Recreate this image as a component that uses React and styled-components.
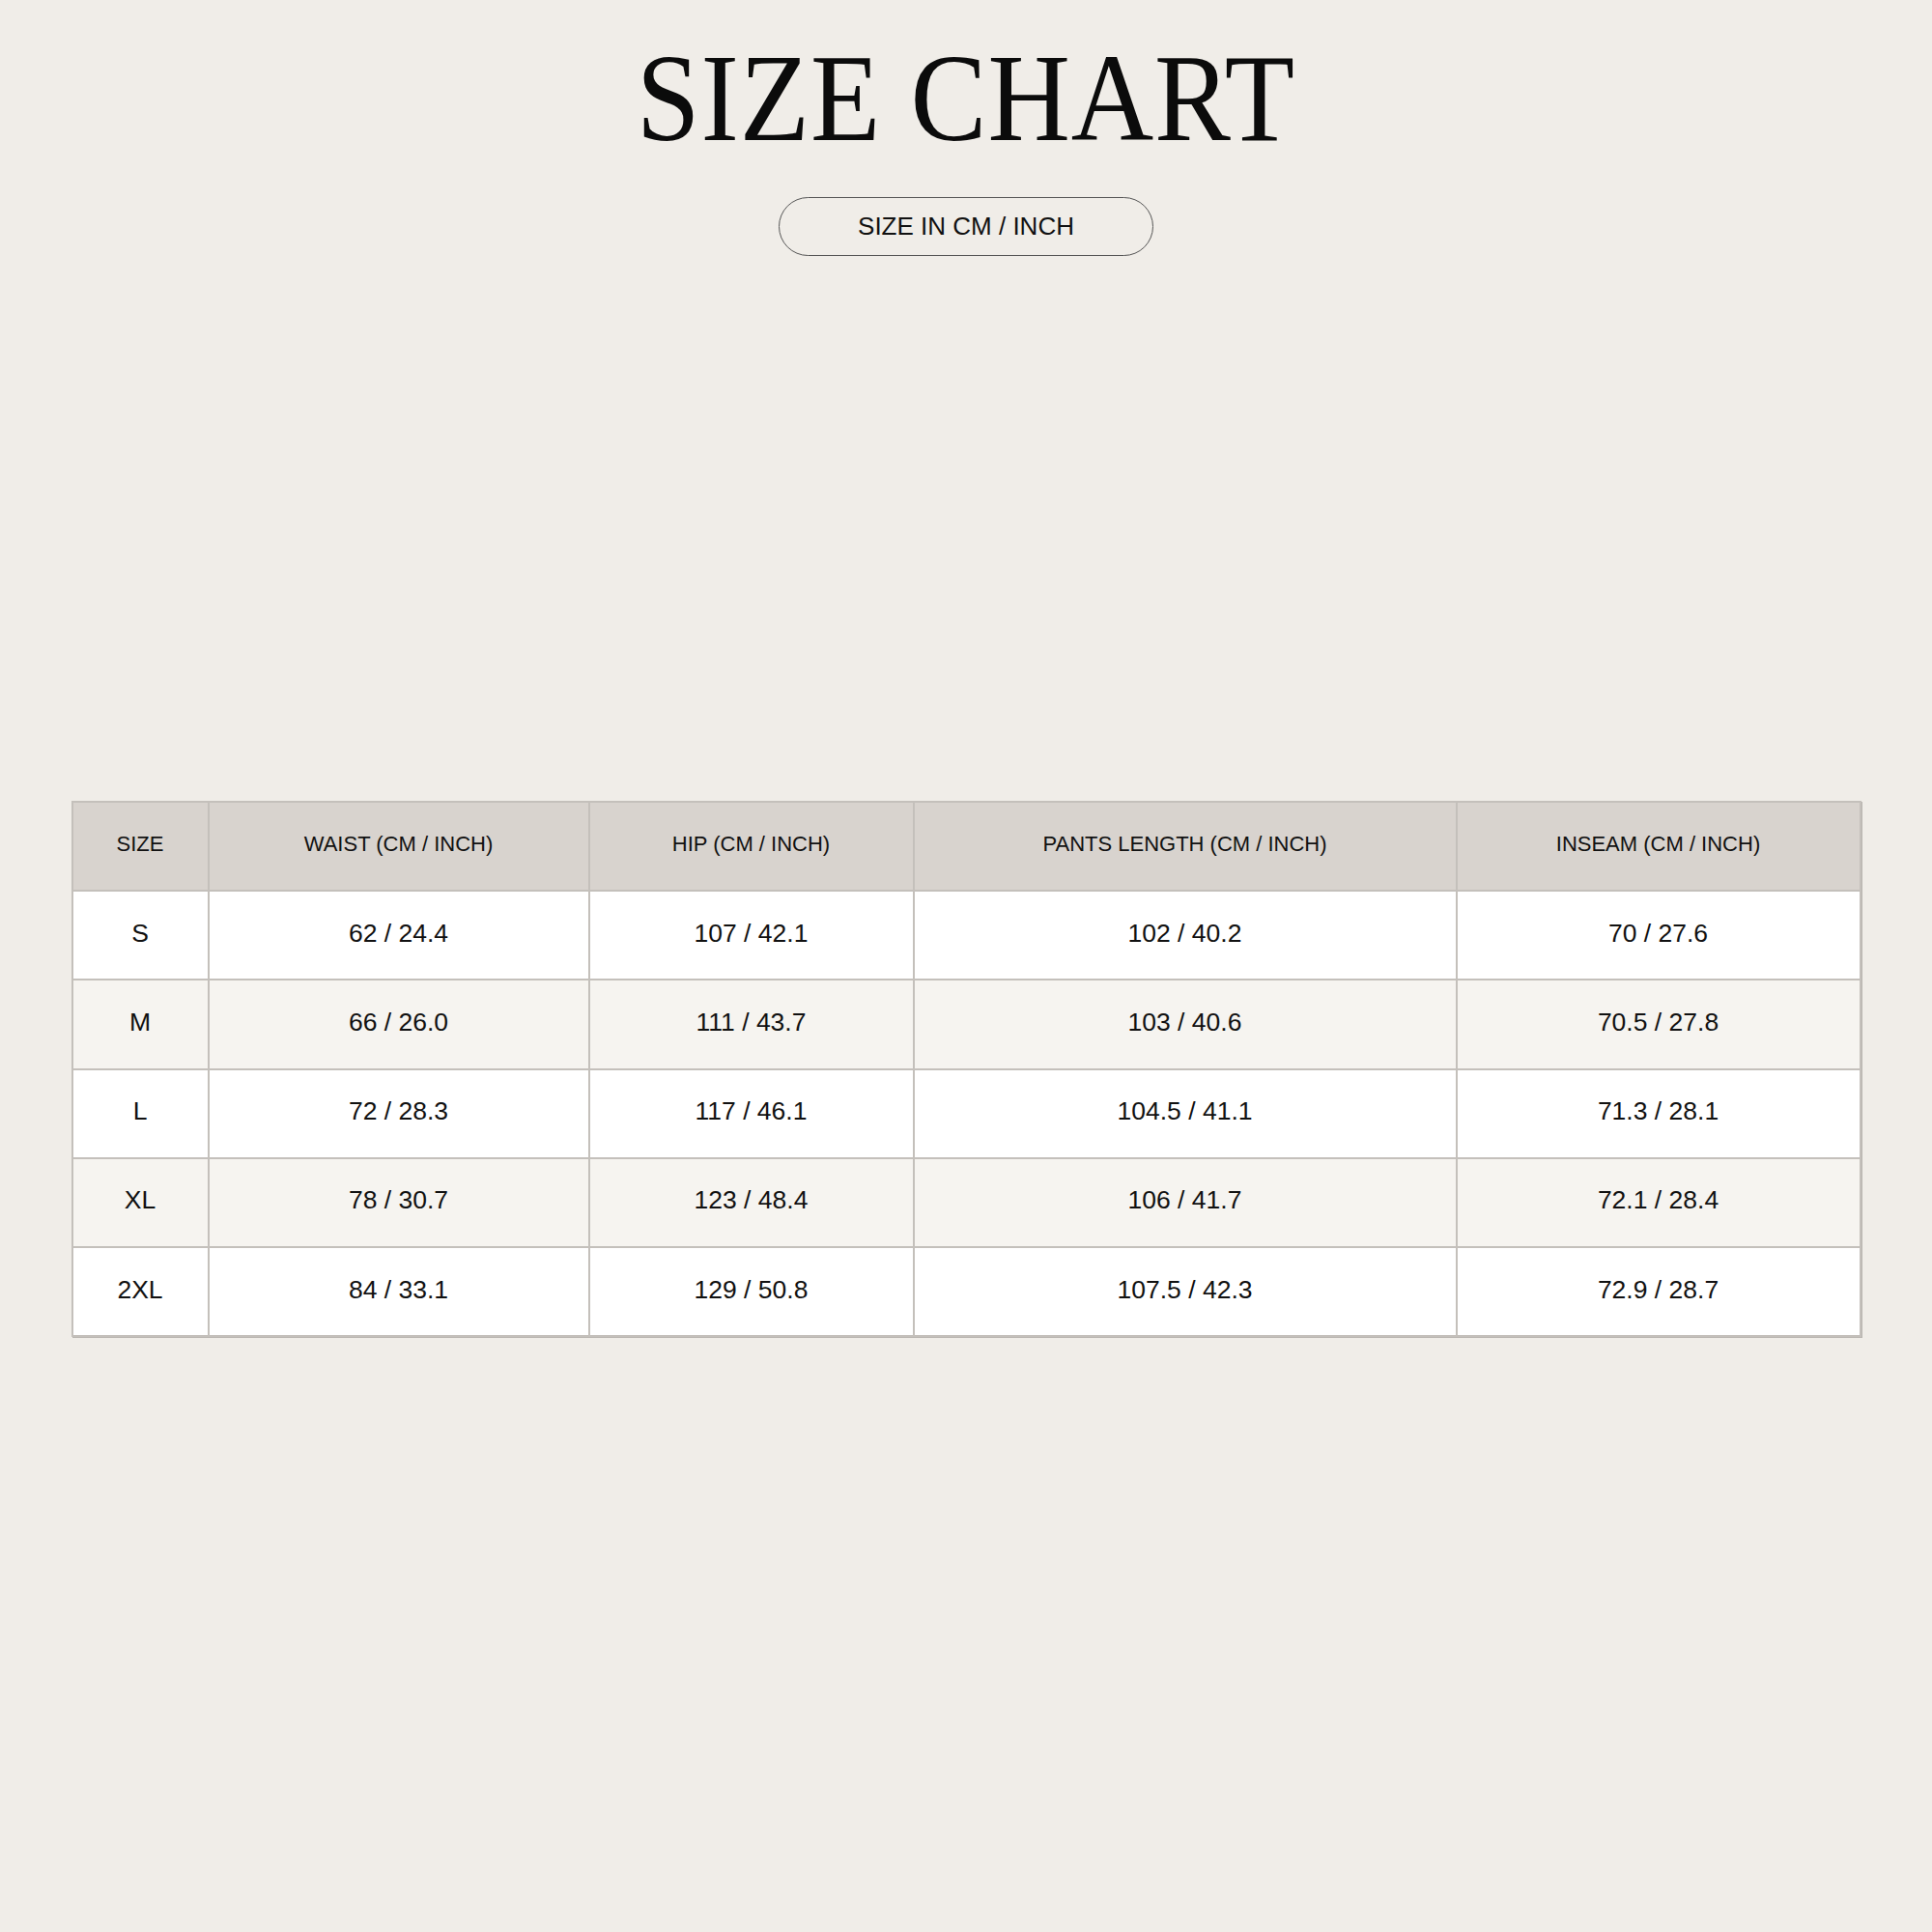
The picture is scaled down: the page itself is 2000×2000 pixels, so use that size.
import React from "react";
import styled, { createGlobalStyle } from "styled-components";

const GlobalStyle = createGlobalStyle`
  html, body {
    margin: 0;
    padding: 0;
    background: #f0ede8;
  }
`;

const Page = styled.div`
  width: 2000px;
  height: 2000px;
  display: flex;
  flex-direction: column;
  align-items: center;
  padding-top: 36px;
  box-sizing: border-box;
  font-family: "Liberation Sans", Arial, sans-serif;
  color: #111;
`;

const Title = styled.h1`
  margin: 0;
  font-family: "Liberation Serif", "Times New Roman", serif;
  font-weight: 400;
  font-size: 130px;
  line-height: 130px;
  letter-spacing: 1px;
  color: #0b0b0b;
  transform: scaleX(0.91);
`;

const Pill = styled.div`
  margin-top: 38px;
  width: 388px;
  height: 61px;
  box-sizing: border-box;
  border: 1.5px solid #555;
  border-radius: 31px;
  display: flex;
  align-items: center;
  justify-content: center;
  font-size: 26px;
  color: #111;
`;

const Grid = styled.div`
  margin-top: 564px;
  display: grid;
  grid-template-columns: 141px 394px 336px 562px 418px;
  grid-auto-rows: 92.2px;
  border-top: 2px solid #c4c0bb;
  border-left: 2px solid #c4c0bb;
  box-shadow: 1px 1px 0 #b8b4af;
`;

const Cell = styled.div`
  display: flex;
  align-items: center;
  justify-content: center;
  padding-bottom: 4px;
  box-sizing: border-box;
  border-right: 2px solid #c4c0bb;
  border-bottom: 2px solid #c4c0bb;
  background: ${(p) => (p.$head ? "#d8d3ce" : p.$alt ? "#f6f4f0" : "#ffffff")};
  font-size: ${(p) => (p.$head ? "22px" : "26.5px")};
  color: #111;
`;

const headers = [
  "SIZE",
  "WAIST (CM / INCH)",
  "HIP (CM / INCH)",
  "PANTS LENGTH (CM / INCH)",
  "INSEAM (CM / INCH)",
];

const rows = [
  ["S", "62 / 24.4", "107 / 42.1", "102 / 40.2", "70 / 27.6"],
  ["M", "66 / 26.0", "111 / 43.7", "103 / 40.6", "70.5 / 27.8"],
  ["L", "72 / 28.3", "117 / 46.1", "104.5 / 41.1", "71.3 / 28.1"],
  ["XL", "78 / 30.7", "123 / 48.4", "106 / 41.7", "72.1 / 28.4"],
  ["2XL", "84 / 33.1", "129 / 50.8", "107.5 / 42.3", "72.9 / 28.7"],
];

export default function App() {
  return (
    <>
      <GlobalStyle />
      <Page>
        <Title>SIZE CHART</Title>
        <Pill>SIZE IN CM / INCH</Pill>
        <Grid>
          {headers.map((h) => (
            <Cell key={h} $head>
              {h}
            </Cell>
          ))}
          {rows.map((r, i) =>
            r.map((v, j) => (
              <Cell key={i + "-" + j} $alt={i % 2 === 1}>
                {v}
              </Cell>
            ))
          )}
        </Grid>
      </Page>
    </>
  );
}
